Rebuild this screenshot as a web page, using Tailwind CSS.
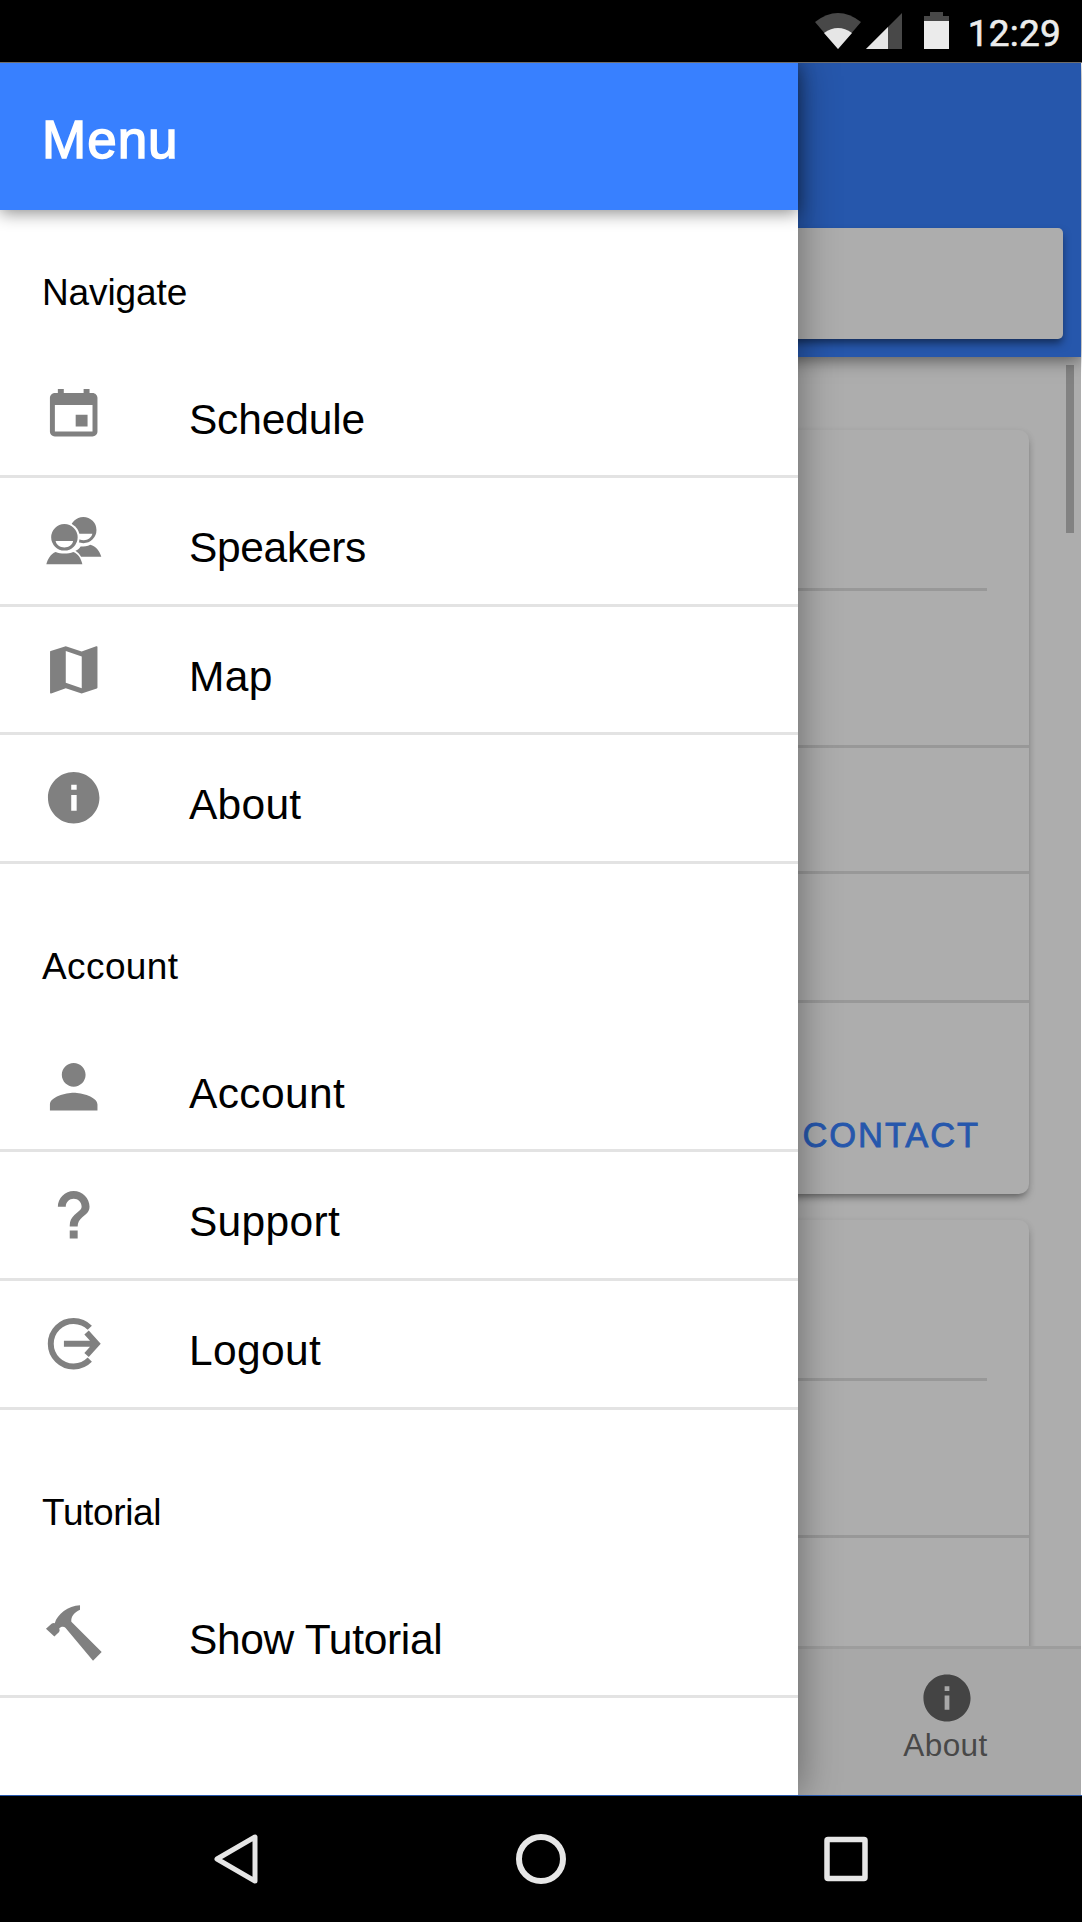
<!DOCTYPE html>
<html lang="en">
<head>
<meta charset="utf-8">
<title>Menu</title>
<script src="https://cdn.jsdelivr.net/npm/@tailwindcss/browser@4"></script>
</head>
<body class="flex h-[1922px] w-[1082px] flex-col overflow-hidden bg-black font-['Liberation_Sans',Arial,sans-serif] text-black">

<!-- Status bar -->
<header class="flex h-[63px] shrink-0 items-center justify-end border-b border-[#6f6d6a] bg-black pr-[21px] font-[Roboto,sans-serif]">
  <svg class="mr-[4px] h-[38px] w-[48px]" viewBox="0 0 48 38">
    <path d="M1 10Q24-8 47 10L24 37Z" fill="#484848"/>
    <path d="M10 21Q24 11 38 21L24 37Z" fill="#e6e6e6"/>
  </svg>
  <svg class="mr-[22px] h-[38px] w-[36px]" viewBox="0 0 36 38">
    <path d="M36 1V37H0Z" fill="#484848"/>
    <path d="M22 15V37H0Z" fill="#e6e6e6"/>
  </svg>
  <svg class="mr-[18px] h-[38px] w-[26px]" viewBox="0 0 26 38">
    <path d="M0 4H6V0H19V4H25V10H0Z" fill="#484848"/>
    <path d="M0 9H25V37H0Z" fill="#ebebeb"/>
  </svg>
  <span class="pt-[4px] text-[37px] leading-none tracking-[0.2px] text-[#ececec] [-webkit-text-stroke:0.6px_#ececec]">12:29</span>
</header>

<main class="relative flex h-[1732px] shrink-0 overflow-hidden bg-white">

  <!-- Dimmed page behind the drawer -->
  <div class="flex w-[1081px] flex-col bg-[#adadad]">
    <div class="relative z-10 flex h-[294px] shrink-0 items-end bg-[#2657ac] pr-[18px] pb-[18px] shadow-[0_3px_16px_rgba(0,0,0,0.5)]">
      <div class="h-[111px] w-full rounded-[5px] bg-[#adadad] shadow-[0_5px_8px_-1px_rgba(0,0,0,0.5)]"></div>
    </div>
    <div class="relative flex h-[1289px] flex-col gap-[26px] overflow-hidden pt-[73px] pr-[52px]">
      <section class="flex h-[764px] shrink-0 flex-col rounded-[10px] bg-[#adadad] shadow-[0_5px_8px_-3px_rgba(0,0,0,0.5),0_2px_8px_rgba(0,0,0,0.06)]">
        <div class="mr-[42px] h-[161px] border-b-3 border-[#989898]"></div>
        <div class="h-[157px] border-b-3 border-[#989898]"></div>
        <div class="h-[126px] border-b-3 border-[#989898]"></div>
        <div class="h-[129px] border-b-3 border-[#989898]"></div>
        <div class="flex grow items-end justify-end pr-[49px] pb-[42px]">
          <span class="text-[34.5px] leading-none tracking-[1.9px] text-[#2657ac] [-webkit-text-stroke:0.8px_#2657ac]">CONTACT</span>
        </div>
      </section>
      <section class="flex h-[500px] shrink-0 flex-col rounded-[10px] bg-[#adadad] shadow-[0_5px_8px_-3px_rgba(0,0,0,0.5),0_2px_8px_rgba(0,0,0,0.06)]">
        <div class="mr-[42px] h-[161px] border-b-3 border-[#989898]"></div>
        <div class="h-[157px] border-b-3 border-[#989898]"></div>
      </section>
      <div class="absolute top-[8px] right-[7px] h-[168px] w-[8px] bg-[#828282]"></div>
    </div>
    <div class="flex h-[149px] shrink-0 justify-end border-t-3 border-[#9d9d9d] bg-[#a8a8a8]">
      <div class="flex w-[268px] flex-col items-center pt-[20px]">
        <svg class="size-[58px]" viewBox="0 0 512 512" fill="#444"><path d="M256 48C141.600 48 48 141.600 48 256s93.600 208 208 208 208-93.600 208-208S370.400 48 256 48zm21 312h-42V235h42v125zm0-166h-42v-42h42v42z"/></svg>
        <span class="pr-[3px] text-[31.500px] leading-[36px] tracking-[0.4px] text-[#484848]">About</span>
      </div>
    </div>
  </div>

  <!-- Drawer -->
  <aside class="absolute inset-y-0 left-0 z-20 flex w-[798px] flex-col bg-white shadow-[0_0_38px_rgba(0,0,0,0.42)]">
    <div class="flex h-[147px] shrink-0 items-center bg-[#3880ff] pt-[6px] pl-[42px] shadow-[0_3px_16px_rgba(0,0,0,0.45)]">
      <h1 class="text-[53px] leading-none tracking-[1px] text-white [-webkit-text-stroke:1.5px_white]">Menu</h1>
    </div>

    <nav class="flex flex-col text-[42.500px] leading-none">
      <h2 class="flex h-[139.600px] items-end pb-[33px] pl-[42px] text-[37px] leading-[48px] tracking-[-0.1px]">Navigate</h2>
      <a class="flex h-[128.600px] items-center gap-[83.500px] border-b-3 border-[#e3e3e3] pl-[42px]">
        <svg class="size-[63.400px]" viewBox="0 0 512 512" fill="#808080"><path d="M368 272h-96v96h96v-96zM336 64v32H176V64h-48v32h-24c-22 0-40 18-40 40v272c0 22 18 40 40 40h304c22 0 40-18 40-40V136c0-22-18-40-40-40h-24V64h-48zm72 344H104V194h304v214z"/></svg>
        <span class="pt-[15px] tracking-[-0.15px]">Schedule</span>
      </a>
      <a class="flex h-[128.600px] items-center gap-[83.500px] border-b-3 border-[#e3e3e3] pl-[42px]">
        <svg class="size-[63.400px]" viewBox="0 0 512 512" fill="#808080">
          <mask id="front"><path d="M0 0h512v512H0z" fill="#fff"/><circle cx="181" cy="229" r="124" fill="#000"/></mask>
          <path mask="url(#front)" fill-rule="evenodd" d="M334 64a106 106 0 1 0 0 212a106 106 0 1 0 0-212zM290 200h117c-8 34-38 50-69 52-26 0-44-8-60-20z"/>
          <path d="M270 337c20-8 34-20 42-34 28 0 55-2 78-14 48 14 76 52 89 97H316c-12-20-28-38-46-49z"/>
          <path fill-rule="evenodd" d="M181 122a107 107 0 1 0 0 214a107 107 0 1 0 0-214zM110 259h141c-5 33-36 51-70 51s-65-18-71-51z"/>
          <path d="M35 447c10-42 36-85 75-100 22 9 46 13 71 13s50-4 72-13c40 14 65 56 73 100z"/>
        </svg>
        <span class="pt-[15px] tracking-[-0.3px]">Speakers</span>
      </a>
      <a class="flex h-[128.600px] items-center gap-[83.500px] border-b-3 border-[#e3e3e3] pl-[42px]">
        <svg class="size-[63.400px]" viewBox="0 0 512 512" fill="#808080"><path fill-rule="evenodd" d="M65 112q0-5 5-7L192 66l128 44 118-43q10-4 10 5v328q0 5-5 7l-123 41-128-43-118 43q-9 3-9-5zM192 105v257l129 44V149z"/></svg>
        <span class="pt-[15px] tracking-[0.4px]">Map</span>
      </a>
      <a class="flex h-[128.600px] items-center gap-[83.500px] border-b-3 border-[#e3e3e3] pl-[42px]">
        <svg class="size-[63.400px]" viewBox="0 0 512 512" fill="#808080"><path d="M256 48C141.600 48 48 141.600 48 256s93.600 208 208 208 208-93.600 208-208S370.400 48 256 48zm24 314h-44V234h44v128zm0-170h-44v-41h44v41z"/></svg>
        <span class="pt-[15px] tracking-[0.3px]">About</span>
      </a>

      <h2 class="flex h-[159.800px] items-end pb-[32.500px] pl-[42px] text-[37px] leading-[48px] tracking-[0.4px]">Account</h2>
      <a class="flex h-[128.600px] items-center gap-[83.500px] border-b-3 border-[#e3e3e3] pl-[42px]">
        <svg class="size-[63.400px]" viewBox="0 0 512 512" fill="#808080"><path d="M256 256c52.800 0 96-43.200 96-96s-43.200-96-96-96-96 43.200-96 96 43.200 96 96 96zm0 48c-63.800 0-192 32.200-192 96v48h384v-48c0-63.800-128.200-96-192-96z"/></svg>
        <span class="pt-[16px] tracking-[0.4px]">Account</span>
      </a>
      <a class="flex h-[128.600px] items-center gap-[83.500px] border-b-3 border-[#e3e3e3] pl-[42px]">
        <svg class="size-[63.400px]" viewBox="4 3 16 16" fill="#808080"><path d="M15.070 10.900l-.9.750C13.450 12.300 13 12.900 13 14h-2v-.3c0-1.100.45-1.900 1.170-2.600l1.240-1.100c.37-.3.59-.6.59-1c0-1.100-.9-2-2-2s-2 .9-2 2H8c0-2.210 1.790-4 4-4s4 1.790 4 4c0 .8-.36 1.400-.93 1.900zM11 15h2v2h-2z"/></svg>
        <span class="pt-[15px] tracking-[0.35px]">Support</span>
      </a>
      <a class="flex h-[128.600px] items-center gap-[83.500px] border-b-3 border-[#e3e3e3] pl-[42px]">
        <svg class="size-[63.400px]" viewBox="0 0 512 512" fill="none" stroke="#808080" stroke-width="48"><path d="M386 127A184 184 0 1 0 386 385"/><path d="M177 256H430M360 165l82 91-82 91"/></svg>
        <span class="pt-[15px] tracking-[0.4px]">Logout</span>
      </a>

      <h2 class="flex h-[160.200px] items-end pb-[32.500px] pl-[42px] text-[37px] leading-[48px] tracking-[-0.35px]">Tutorial</h2>
      <a class="flex h-[128.600px] items-center gap-[83.500px] border-b-3 border-[#e3e3e3] pl-[42px]">
        <svg class="size-[63.400px]" viewBox="0 0 512 512" fill="#808080"><path d="M307 35V70C262 90 232 125 237 168L482 412 412 482 189 216C178 205 150 206 139 223Q147 238 138 250L100 286 32 224 77 183Q90 176 103 179C124 110 210 36 307 35Z"/></svg>
        <span class="pt-[16px] tracking-[-0.3px]">Show Tutorial</span>
      </a>
    </nav>
  </aside>
</main>

<!-- System navigation -->
<footer class="flex h-[127px] shrink-0 items-center justify-between border-t border-[#2657ac] bg-black pr-[213px] pl-[214px]">
  <svg class="h-[50px] w-[44px]" viewBox="0 0 44 50"><path d="M41 3V47L3 25Z" fill="none" stroke="#e6e6e6" stroke-width="5" stroke-linejoin="round"/></svg>
  <svg class="-ml-[1px] size-[50px]" viewBox="0 0 50 50"><circle cx="25" cy="25" r="22" fill="none" stroke="#e6e6e6" stroke-width="6"/></svg>
  <svg class="h-[46px] w-[45px]" viewBox="0 0 45 46"><rect x="3" y="3.500" width="38" height="39" rx="1" fill="none" stroke="#e6e6e6" stroke-width="5.500"/></svg>
</footer>
</body>
</html>
